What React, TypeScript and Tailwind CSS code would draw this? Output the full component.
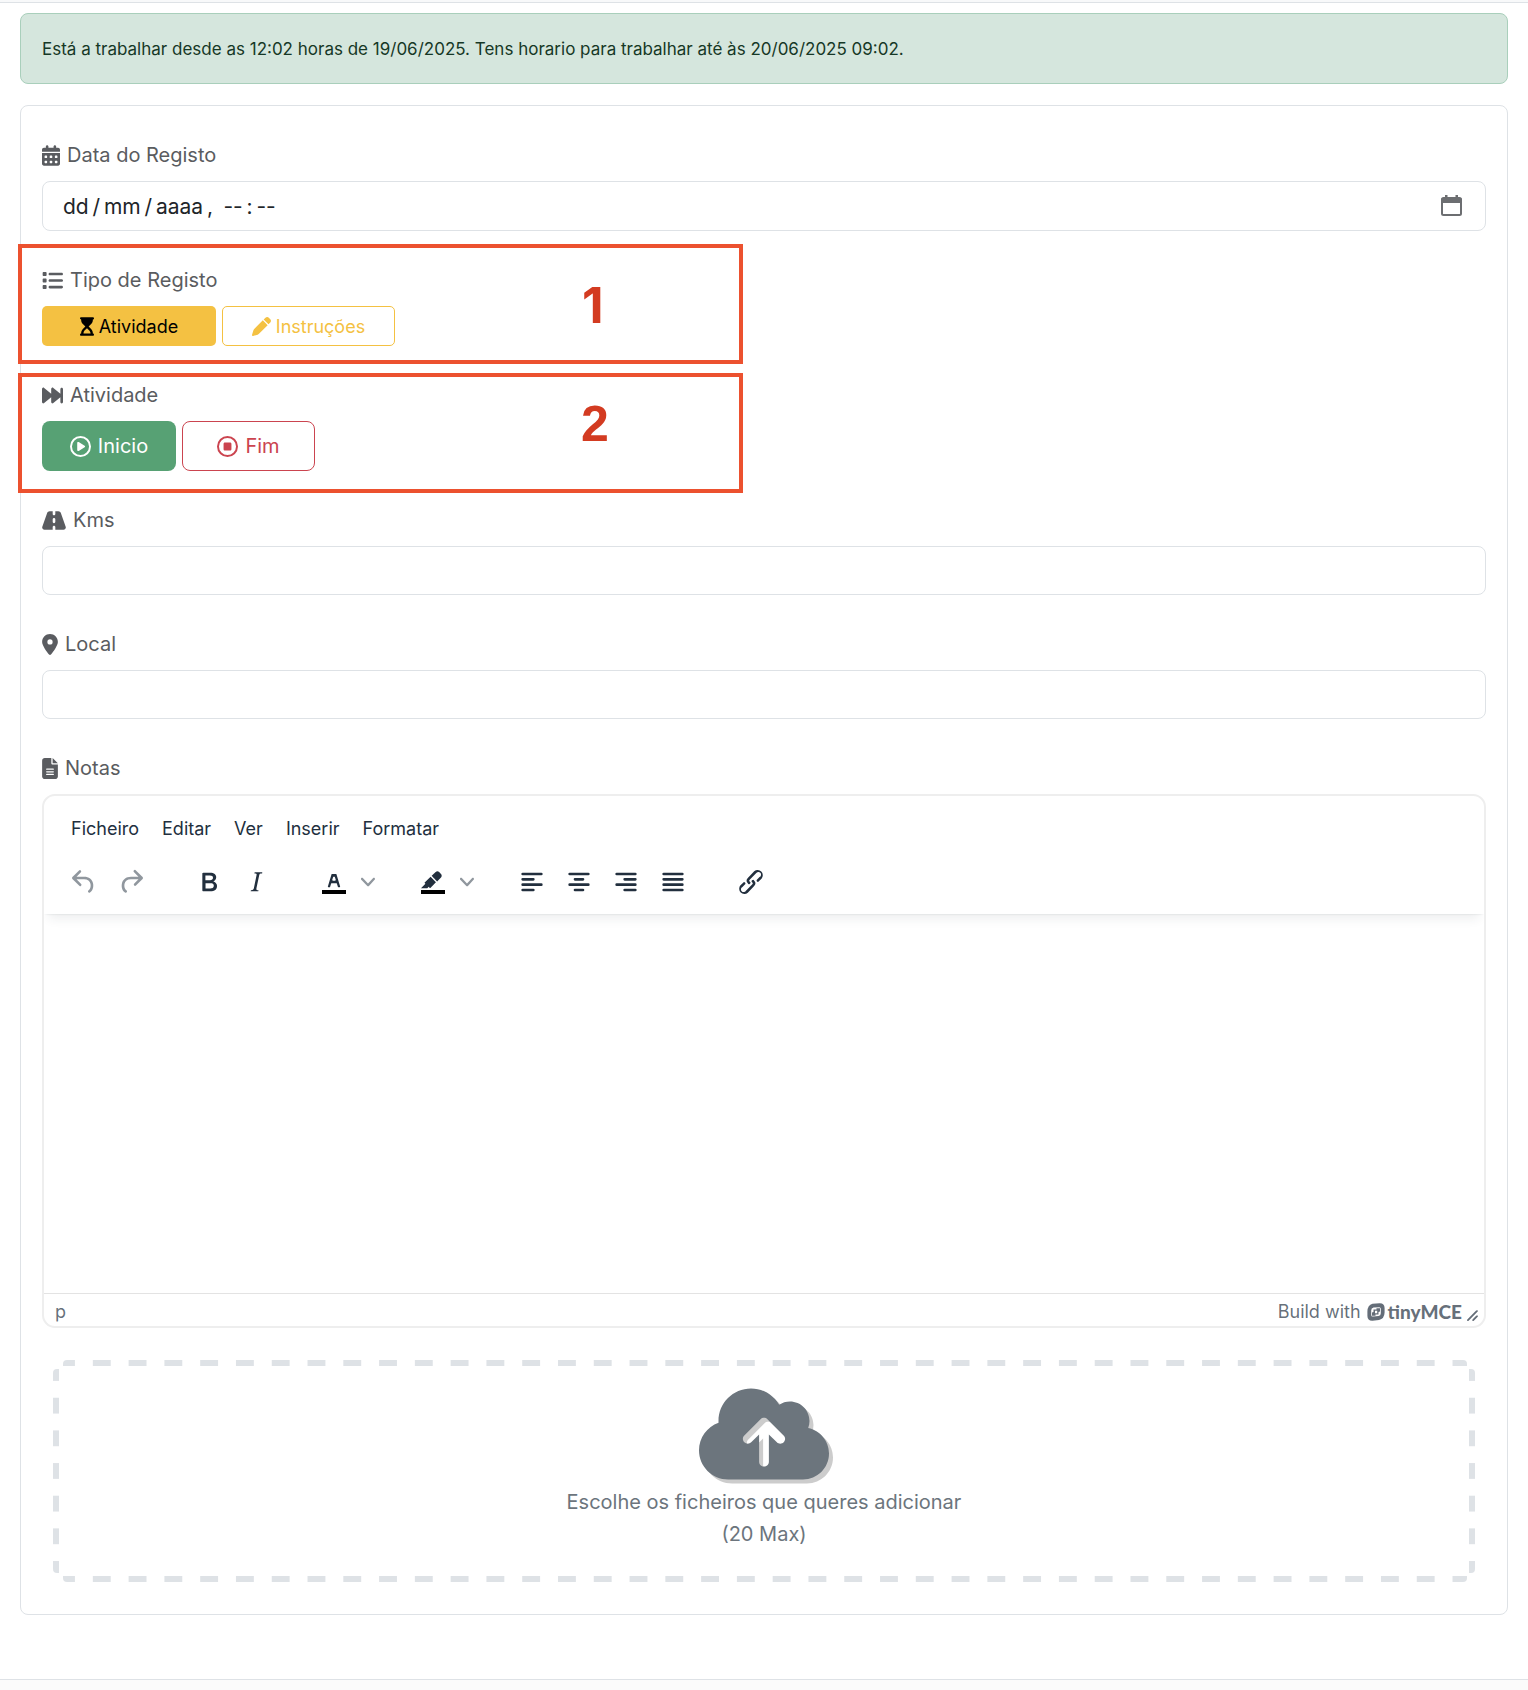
import { useState } from "react";
import type { ReactNode } from "react";
import {
  FaCalendarDays,
  FaCloudArrowUp,
  FaFileLines,
  FaForwardFast,
  FaHourglassStart,
  FaList,
  FaLocationDot,
  FaPen,
  FaRegCirclePlay,
  FaRegCircleStop,
  FaRoad,
} from "react-icons/fa6";

const labelClass =
  "mb-[10px] flex h-8 items-center gap-[7px] text-[20px] leading-8 text-[#5a5c60]";
const inputClass =
  "block h-[49px] w-full rounded-lg border border-[#dee2e6] bg-white px-5 text-[20px] text-[#212529] outline-none";

const MENUS = ["Ficheiro", "Editar", "Ver", "Inserir", "Formatar"];

// 24x24 glyphs of the editor toolbar
const GLYPHS = {
  undo: "M6.4 8H12c3.7 0 6.2 2 6.8 5.1.6 2.7-.4 5.6-2.3 6.8a1 1 0 0 1-1-1.8c1.1-.6 1.8-2.7 1.4-4.6-.5-2.1-2.1-3.5-4.9-3.5H6.4l3.3 3.3a1 1 0 1 1-1.4 1.4l-5-5a1 1 0 0 1 0-1.4l5-5a1 1 0 0 1 1.4 1.4L6.4 8Z",
  redo: "M17.6 10H12c-2.8 0-4.4 1.4-4.9 3.5-.4 2 .3 4 1.4 4.6a1 1 0 1 1-1 1.8c-2-1.2-2.9-4.1-2.3-6.8.6-3 3-5.1 6.8-5.1h5.6l-3.3-3.3a1 1 0 1 1 1.4-1.4l5 5a1 1 0 0 1 0 1.4l-5 5a1 1 0 0 1-1.4-1.4l3.3-3.3Z",
  bold: "M7.8 19c-.3 0-.5 0-.6-.2l-.2-.5V5.7c0-.2 0-.4.2-.5l.6-.2h5c1.5 0 2.7.3 3.5 1 .7.6 1.1 1.4 1.1 2.5a3 3 0 0 1-.6 1.9c-.4.6-1 1-1.6 1.2.4.1.9.3 1.3.6s.8.7 1 1.2c.4.4.5 1 .5 1.6 0 1.3-.4 2.3-1.3 3-.8.7-2.1 1-3.8 1H7.8Zm5-8.3c.6 0 1.2-.1 1.6-.5.4-.3.6-.7.6-1.3 0-1.1-.8-1.7-2.3-1.7H9.3v3.5h3.4Zm.5 6c.7 0 1.3-.1 1.7-.4.4-.4.6-.9.6-1.5s-.2-1-.7-1.4c-.4-.3-1-.4-2-.4H9.4v3.8h4Z",
  italic:
    "m16.7 4.7-.1.9h-.3c-.6 0-1 0-1.4.3-.3.3-.4.6-.5 1.1l-2.1 9.8v.6c0 .5.4.8 1.4.8h.2l-.2.8H8l.2-.8h.2c1.1 0 1.8-.5 2-1.5l2-9.8.1-.5c0-.6-.4-.8-1.4-.8h-.3l.2-.9h5.8Z",
  textColor:
    "M8.7 16h-.8a.5.5 0 0 1-.5-.6l2.7-9c.1-.3.3-.4.5-.4h2.8c.2 0 .4.1.5.4l2.7 9a.5.5 0 0 1-.5.6h-.8a.5.5 0 0 1-.4-.4l-.7-2.2c0-.3-.3-.4-.5-.4h-3.4c-.2 0-.4.1-.5.4l-.7 2.2c0 .3-.2.4-.4.4Zm2.6-7.6-.6 2a.5.5 0 0 0 .5.6h1.6a.5.5 0 0 0 .5-.6l-.6-2c0-.3-.3-.4-.5-.4h-.4c-.2 0-.4.1-.5.4Z",
  highlight:
    "M7.7 16.7H3l3.3-3.3-.7-.8L10.2 8l4 4.1-4 4.2c-.2.2-.6.2-.8 0l-.6-.7-1.1 1.1zm5-7.5L11 7.4l3-2.9a2 2 0 0 1 2.6 0L18 6c.7.7.7 2 0 2.7l-2.9 2.9-1.8-1.8-.5-.6",
  link: "M6.2 12.3a1 1 0 0 1 1.4 1.4l-2 2a2 2 0 1 0 2.6 2.8l4.8-4.8a1 1 0 0 0 0-1.4 1 1 0 1 1 1.4-1.3 2.9 2.9 0 0 1 0 4L9.6 20a3.9 3.9 0 0 1-5.5-5.5l2-2Zm11.6-.6a1 1 0 0 1-1.4-1.4l2-2a2 2 0 1 0-2.6-2.8L11 10.3a1 1 0 0 0 0 1.4A1 1 0 1 1 9.6 13a2.9 2.9 0 0 1 0-4L14.4 4a3.9 3.9 0 0 1 5.5 5.5l-2 2Z",
};

const ALIGN = {
  left: "M5 6h14M5 10h8M5 14h14M5 18h8",
  center: "M5 6h14M9 10h6M5 14h14M9 18h6",
  right: "M5 6h14M11 10h8M5 14h14M11 18h8",
  justify: "M5 6h14M5 10h14M5 14h14M5 18h14",
};

function Glyph({ d, bar = false }: { d: string; bar?: boolean }) {
  return (
    <svg viewBox="0 0 24 24" className="size-8" fill="currentColor" aria-hidden="true">
      {bar && <path d="M3 18h18v3H3z" fill="#000" />}
      <path d={d} />
    </svg>
  );
}

function AlignGlyph({ d }: { d: string }) {
  return (
    <svg
      viewBox="0 0 24 24"
      className="size-8"
      fill="none"
      stroke="currentColor"
      strokeWidth="2"
      strokeLinecap="round"
      aria-hidden="true"
    >
      <path d={d} />
    </svg>
  );
}

function ToolButton({
  label,
  children,
  disabled = false,
}: {
  label: string;
  children: ReactNode;
  disabled?: boolean;
}) {
  return (
    <button
      type="button"
      aria-label={label}
      disabled={disabled}
      className="flex h-10 w-[47px] items-center justify-center text-[#222f3e] disabled:text-[#222f3e]/50"
    >
      {children}
    </button>
  );
}

function SplitButton({ label, d }: { label: string; d: string }) {
  return (
    <div className="flex items-center">
      <ToolButton label={label}>
        <Glyph d={d} bar />
      </ToolButton>
      <button
        type="button"
        aria-label={`${label}: opções`}
        className="flex h-10 w-[21px] items-center justify-center text-[#222f3e]/50"
      >
        <svg viewBox="0 0 10 10" className="size-[14px]" fill="currentColor" aria-hidden="true">
          <path d="M8.7 2.2c.3-.3.8-.3 1 0 .4.4.4.9 0 1.2L5.7 7.8c-.3.3-.9.3-1.2 0L.2 3.4a.8.8 0 0 1 0-1.2c.3-.3.8-.3 1.1 0L5 6l3.7-3.8Z" />
        </svg>
      </button>
    </div>
  );
}

function NotesEditor() {
  const [notes, setNotes] = useState("");

  return (
    <div className="overflow-hidden rounded-[13px] border-2 border-[#eeeeee] bg-white">
      <div className="relative h-[118px] shadow-[0_2px_2px_-2px_rgba(34,47,62,0.15),0_10px_10px_-5px_rgba(34,47,62,0.08)]">
        <div role="menubar" className="flex h-[65px] items-center gap-[23px] pl-[27px]">
          {MENUS.map((menu) => (
            <button
              key={menu}
              type="button"
              role="menuitem"
              className="text-[18px] leading-6 text-[#222f3e]"
            >
              {menu}
            </button>
          ))}
        </div>
        <div
          role="toolbar"
          aria-label="Formatação"
          className="flex h-[42px] items-center gap-[31px] pl-4"
        >
          <div className="flex">
            <ToolButton label="Desfazer" disabled>
              <Glyph d={GLYPHS.undo} />
            </ToolButton>
            <ToolButton label="Refazer" disabled>
              <Glyph d={GLYPHS.redo} />
            </ToolButton>
          </div>
          <div className="flex">
            <ToolButton label="Negrito">
              <Glyph d={GLYPHS.bold} />
            </ToolButton>
            <ToolButton label="Itálico">
              <Glyph d={GLYPHS.italic} />
            </ToolButton>
          </div>
          <SplitButton label="Cor do texto" d={GLYPHS.textColor} />
          <SplitButton label="Cor de fundo" d={GLYPHS.highlight} />
          <div className="flex">
            <ToolButton label="Alinhar à esquerda">
              <AlignGlyph d={ALIGN.left} />
            </ToolButton>
            <ToolButton label="Centrar">
              <AlignGlyph d={ALIGN.center} />
            </ToolButton>
            <ToolButton label="Alinhar à direita">
              <AlignGlyph d={ALIGN.right} />
            </ToolButton>
            <ToolButton label="Justificar">
              <AlignGlyph d={ALIGN.justify} />
            </ToolButton>
          </div>
          <ToolButton label="Inserir ligação">
            <Glyph d={GLYPHS.link} />
          </ToolButton>
        </div>
      </div>
      <textarea
        id="notas"
        value={notes}
        onChange={(e) => setNotes(e.target.value)}
        className="block h-[379px] w-full resize-none p-4 text-[20px] outline-none"
      />
      <div className="flex h-[33px] items-center border-t border-[#e3e3e3] pt-[3px] pr-[5px] pl-[11px] text-[18px] leading-6 text-[#222f3e]/70">
        <span>p</span>
        <span className="mr-[6px] ml-auto">Build with</span>
        <a href="#tiny" className="flex items-center gap-[3px] font-['Lato'] text-[19px] font-black">
          <svg viewBox="0 0 18 18" className="size-[18px]" fill="currentColor" aria-hidden="true">
            <path
              fillRule="evenodd"
              d="M5.500.8 12.500.2Q17.500 0 17.600 5V9.500Q17.400 15.800 12 17L5.500 17.800Q.5 18 .4 13V8.500Q.6 2 5.500.8ZM6.500 4.600Q4.200 5 4.200 7.500V12Q4.200 13.800 6 13.600L11.500 13Q13.800 12.600 13.800 10.200V5.800Q13.800 4 12 4.200Z"
            />
            <path fillRule="evenodd" d="M9.500 5.200H13V8.500L11.500 9V11.500H8.500V12.800H5V9.500L6.500 9V6.500H9.500ZM8 7.800V10.200H10.200V7.800Z" />
          </svg>
          tinyMCE
        </a>
        <svg viewBox="0 0 10 10" className="mt-2 ml-1 size-[13px]" fill="currentColor" aria-hidden="true">
          <path d="M8.1 1.1A.5.5 0 1 1 9 2l-7 7A.5.5 0 1 1 1 8l7-7ZM8.1 5.1A.5.5 0 1 1 9 6l-3 3A.5.5 0 1 1 5 8l3-3Z" />
        </svg>
      </div>
    </div>
  );
}

// Dashes are background tiles, rounded so that they fit the side exactly
function DashedFrame() {
  const horizontal =
    "absolute right-2 left-[10px] h-[6px] bg-[linear-gradient(90deg,#dee2e6_25%,transparent_25%_75%,#dee2e6_75%)] bg-[length:36px_6px] bg-repeat-round bg-origin-content pr-[5px] pl-[3px]";
  const vertical =
    "absolute top-[9px] bottom-[9px] w-[6px] bg-[linear-gradient(#dee2e6_25%,transparent_25%_75%,#dee2e6_75%)] bg-[length:6px_32px] bg-repeat-round bg-origin-content py-1";

  return (
    <span aria-hidden="true">
      <span className={`${horizontal} top-0 rounded-t-sm`} />
      <span className={`${horizontal} bottom-0 rounded-b-sm`} />
      <span className={`${vertical} left-0 rounded-l-sm`} />
      <span className={`${vertical} right-0 rounded-r-sm`} />
    </span>
  );
}

export default function App() {
  const [date, setDate] = useState(
    "dd\u2009/\u2009mm\u2009/\u2009aaaa\u2009,\u2002--\u2009:\u2009--",
  );

  return (
    <div className="bg-white font-['Inter','Liberation_Sans',sans-serif]">
      <div className="h-[3px] border-b border-[#dee2e6] bg-[#f8f9fa]" />

      <main className="px-5 pt-[10px] pb-16">
        <div
          role="alert"
          className="rounded-lg border border-[#a9cfbb] bg-[#d5e6dd] px-[21px] pt-[22px] pb-5 text-[17px] leading-[27px] text-[#163826]"
        >
          Está a trabalhar desde as 12:02 horas de 19/06/2025. Tens horario para trabalhar até às
          20/06/2025 09:02.
        </div>

        <form
          className="mt-[21px] flex flex-col gap-[33px] rounded-lg border border-[#dee2e6] px-[21px] pt-[33px] pb-8"
          onSubmit={(e) => e.preventDefault()}
        >
          <div>
            <label htmlFor="data" className={labelClass}>
              <FaCalendarDays className="h-[21px] w-[18px]" />
              Data do Registo
            </label>
            <div className="flex h-[50px] items-center rounded-lg border border-[#dee2e6] pr-[23px] pl-5">
              <input
                id="data"
                type="text"
                value={date}
                onChange={(e) => setDate(e.target.value)}
                className="min-w-0 flex-1 pt-[2px] text-[21px] text-[#212529] outline-none"
              />
              <button type="button" aria-label="Abrir calendário" className="pb-[2px] text-[#6c6e71]">
                <svg viewBox="0 0 21 21" className="size-[21px]" fill="none" aria-hidden="true">
                  <rect x="1" y="3" width="19" height="17" rx="1.500" stroke="currentColor" strokeWidth="2" />
                  <path d="M0 8V4.500Q0 3 1.500 3h18Q21 3 21 4.500V8ZM4 0h2.500v3H4ZM14.500 0H17v3h-2.500Z" fill="currentColor" />
                </svg>
              </button>
            </div>
          </div>

          <div role="group" aria-labelledby="tipo-label" className="relative">
            <div id="tipo-label" className={labelClass}>
              <FaList className="size-[21px]" />
              Tipo de Registo
            </div>
            <div className="flex gap-[6px]">
              <button
                type="button"
                aria-pressed="true"
                className="flex h-10 w-[174px] items-center justify-center gap-[5px] rounded-[5px] bg-[#f4c142] text-[18px] text-black"
              >
                <FaHourglassStart className="h-[19px] w-[14px]" />
                Atividade
              </button>
              <button
                type="button"
                aria-pressed="false"
                className="flex h-10 w-[173px] items-center justify-center gap-[5px] rounded-[5px] border border-[#f4c142] text-[18px] text-[#f4c142]"
              >
                <FaPen className="size-[19px]" />
                Instruções
              </button>
            </div>
            <div className="pointer-events-none absolute -top-5 -left-6 flex h-[120px] w-[725px] items-center border-4 border-[#ec512f]">
              <span className="pt-[2px] pl-[560px] text-[50px] leading-none font-bold text-[#d33b21]">
                1
              </span>
            </div>
          </div>

          <div role="group" aria-labelledby="atividade-label" className="relative">
            <div id="atividade-label" className={labelClass}>
              <FaForwardFast className="size-[21px]" />
              Atividade
            </div>
            <div className="flex gap-[6px]">
              <button
                type="button"
                aria-pressed="true"
                className="flex h-[50px] w-[134px] items-center justify-center gap-[7px] rounded-lg bg-[#57a174] text-[20px] text-white"
              >
                <FaRegCirclePlay className="size-[21px]" />
                Inicio
              </button>
              <button
                type="button"
                aria-pressed="false"
                className="flex h-[50px] w-[133px] items-center justify-center gap-[7px] rounded-lg border border-[#cb444f] text-[20px] text-[#cb444f]"
              >
                <FaRegCircleStop className="size-[21px]" />
                Fim
              </button>
            </div>
            <div className="pointer-events-none absolute -top-[6px] -left-6 flex h-[120px] w-[725px] items-start border-4 border-[#ec512f]">
              <span className="pt-[22px] pl-[559px] font-['Liberation_Sans',sans-serif] text-[50px] leading-none font-bold text-[#d33b21]">
                2
              </span>
            </div>
          </div>

          <div>
            <label htmlFor="kms" className={labelClass}>
              <FaRoad className="h-[21px] w-6" />
              Kms
            </label>
            <input id="kms" type="text" className={inputClass} />
          </div>

          <div>
            <label htmlFor="local" className={labelClass}>
              <FaLocationDot className="h-[21px] w-4" />
              Local
            </label>
            <input id="local" type="text" className={inputClass} />
          </div>

          <div>
            <label htmlFor="notas" className={labelClass}>
              <FaFileLines className="h-[21px] w-4" />
              Notas
            </label>
            <NotesEditor />

            <label className="relative mx-[11px] mt-8 flex cursor-pointer flex-col items-center pt-[22px] pb-8 text-center text-[20px] leading-8 text-[#6c757d]">
              <DashedFrame />
              <FaCloudArrowUp className="h-[104px] w-[130px] drop-shadow-[4px_4px_0_#cccccc]" />
              <span>Escolhe os ficheiros que queres adicionar</span>
              <span>(20 Max)</span>
              <input type="file" multiple className="sr-only" />
            </label>
          </div>
        </form>
      </main>

      <div className="h-[11px] border-t border-[#dee2e6] bg-[#fbfbfb]" />
    </div>
  );
}
